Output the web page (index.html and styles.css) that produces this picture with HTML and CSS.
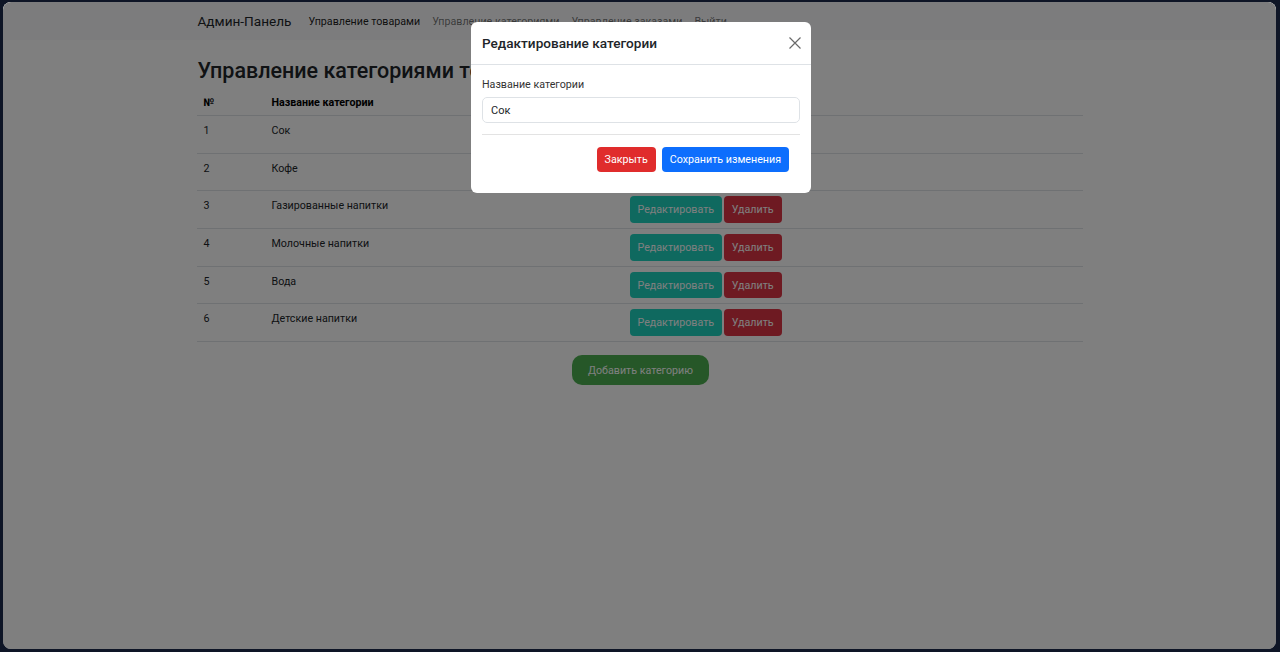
FILE: index.html
```html
<!DOCTYPE html>
<html lang="ru">
<head>
<meta charset="utf-8">
<title>Админ-Панель</title>
<link rel="stylesheet" href="styles.css">
</head>
<body>
<div class="window">
  <nav class="navbar">
    <div class="container nav-inner">
      <span class="brand">Админ-Панель</span>
      <a class="nav-link active">Управление товарами</a>
      <a class="nav-link">Управление категориями</a>
      <a class="nav-link">Управление заказами</a>
      <a class="nav-link">Выйти</a>
    </div>
  </nav>
  <main class="container">
    <h2 class="title">Управление категориями товаров</h2>
    <table class="table">
      <thead>
        <tr><th class="c-num">№</th><th class="c-name">Название категории</th><th class="c-act"></th></tr>
      </thead>
      <tbody>
        <tr><td>1</td><td>Сок</td><td><button class="btn btn-edit">Редактировать</button> <button class="btn btn-del">Удалить</button></td></tr>
        <tr><td>2</td><td>Кофе</td><td><button class="btn btn-edit">Редактировать</button> <button class="btn btn-del">Удалить</button></td></tr>
        <tr><td>3</td><td>Газированные напитки</td><td><button class="btn btn-edit">Редактировать</button> <button class="btn btn-del">Удалить</button></td></tr>
        <tr><td>4</td><td>Молочные напитки</td><td><button class="btn btn-edit">Редактировать</button> <button class="btn btn-del">Удалить</button></td></tr>
        <tr><td>5</td><td>Вода</td><td><button class="btn btn-edit">Редактировать</button> <button class="btn btn-del">Удалить</button></td></tr>
        <tr><td>6</td><td>Детские напитки</td><td><button class="btn btn-edit">Редактировать</button> <button class="btn btn-del">Удалить</button></td></tr>
      </tbody>
    </table>
    <div class="add-row"><button class="btn-add">Добавить категорию</button></div>
  </main>
  <div class="backdrop"></div>
  <div class="modal">
    <div class="modal-header">
      <h5 class="modal-title">Редактирование категории</h5>
      <button class="close" aria-label="Закрыть">
        <svg width="12" height="12" viewBox="0 0 12 12"><path d="M0.5 0.5L11.5 11.5M11.5 0.5L0.5 11.5" stroke="#6a6a6a" stroke-width="1.2" fill="none"/></svg>
      </button>
    </div>
    <div class="modal-body">
      <label class="label">Название категории</label>
      <input class="input" type="text" value="Сок">
      <div class="divider"></div>
      <div class="actions">
        <button class="mbtn mbtn-close">Закрыть</button>
        <button class="mbtn mbtn-save">Сохранить изменения</button>
      </div>
    </div>
  </div>
</div>
</body>
</html>
```

FILE: styles.css
```css
* { box-sizing: border-box; }
html, body { margin: 0; padding: 0; }
body {
  background: #0e1526;
  font-family: Roboto, "Noto Sans", sans-serif;
  color: #212529;
  width: 1280px;
  height: 652px;
  overflow: hidden;
}
.window {
  position: relative;
  margin: 2px 4px 0 3px;
  height: 647px;
  background: #fff;
  border-radius: 8px;
  overflow: hidden;
}
.container {
  width: 886px;
  margin: 0 auto;
  padding: 0;
}
.navbar {
  background: #f8f9fa;
  height: 38px;
}
.nav-inner {
  display: flex;
  align-items: center;
  height: 38px;
  padding-left: 1px;
}
.brand {
  font-size: 13.6px;
  color: #212529;
  margin-right: 11px;
}
.nav-link {
  font-size: 10.7px;
  color: rgba(0,0,0,.55);
  padding: 0 6px;
  text-decoration: none;
}
.nav-link.active { color: rgba(0,0,0,.9); }
.title {
  margin: 16px 0 5px;
  padding-left: 1px;
  font-size: 21.5px;
  font-weight: 500;
  line-height: 30px;
  color: #212529;
}
.table {
  width: 100%;
  border-collapse: collapse;
  font-size: 10.7px;
}
.table th {
  text-align: left;
  font-weight: 700;
  padding: 5px 7px 6px;
  line-height: 13px;
  border-bottom: 1px solid #dee2e6;
  color: #000;
}
.table td {
  padding: 5px 7px;
  line-height: 19px;
  border-bottom: 1px solid #dee2e6;
  vertical-align: top;
}
.c-num { width: 68px; }
.c-name { width: 358px; }
.btn {
  font-family: inherit;
  font-size: 10.7px;
  border: 0;
  border-radius: 4px;
  color: #fff;
  height: 26.7px;
  padding: 0 8px;
  vertical-align: top;
  cursor: pointer;
}
.btn-edit { background: #1ed2be; }
.btn-del { background: #dc3545; margin-left: -1px; padding: 0 8px; }
.add-row {
  display: flex;
  justify-content: center;
  padding-top: 13px;
  padding-left: 2px;
}
.btn-add {
  font-family: inherit;
  font-size: 10.7px;
  color: #fff;
  background: #4caf50;
  border: 0;
  border-radius: 10px;
  height: 30px;
  padding: 0 16px;
}
.backdrop {
  position: absolute;
  inset: 0;
  background: rgba(0,0,0,.5);
}
.modal {
  position: absolute;
  left: 468px;
  top: 20px;
  width: 340px;
  background: #fff;
  border-radius: 6px;
}
.modal-header {
  display: flex;
  align-items: center;
  justify-content: space-between;
  height: 43px;
  padding: 0 10px 0 11px;
  border-bottom: 1px solid #dee2e6;
}
.modal-title {
  margin: 0;
  font-size: 13.6px;
  font-weight: 500;
  color: #212529;
}
.close {
  background: none;
  border: 0;
  padding: 0;
  display: flex;
}
.modal-body {
  padding: 12px 11px 21px;
}
.label {
  display: block;
  font-size: 10.7px;
  line-height: 16px;
  color: #333;
  margin-bottom: 4px;
}
.input {
  display: block;
  width: 100%;
  height: 26px;
  border: 1px solid #dee2e6;
  border-radius: 5px;
  padding: 0 8px;
  font-family: inherit;
  font-size: 11px;
  color: #212529;
}
.divider {
  height: 1px;
  background: #e3e3e3;
  margin: 11px 0 12px;
}
.actions {
  display: flex;
  justify-content: flex-end;
  gap: 6px;
  padding-right: 11px;
}
.mbtn {
  font-family: inherit;
  font-size: 10.7px;
  color: #fff;
  border: 0;
  border-radius: 4px;
  height: 25px;
  padding: 0 8px;
}
.mbtn-close { background: #e02c2c; }
.mbtn-save { background: #0d6efd; }
```
